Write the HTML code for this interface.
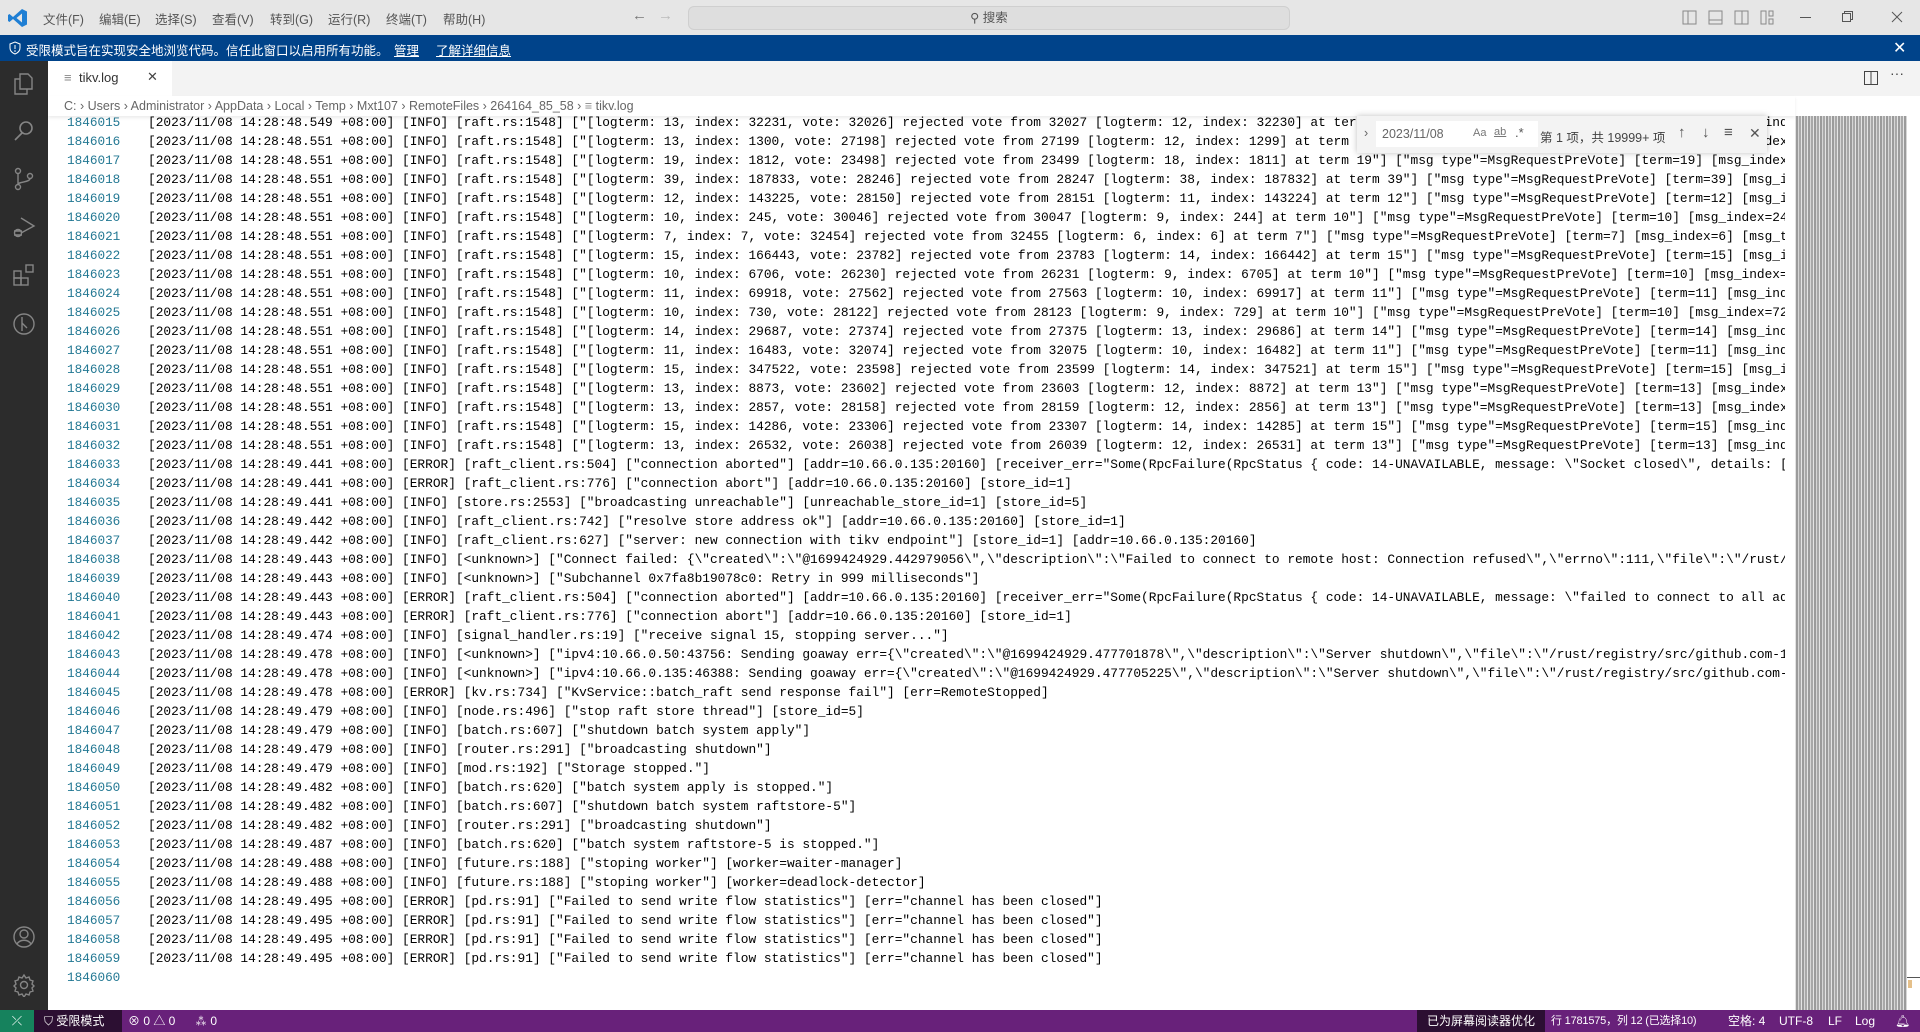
<!DOCTYPE html>
<html><head><meta charset="utf-8">
<style>
*{margin:0;padding:0;box-sizing:border-box}
body{width:1920px;height:1032px;overflow:hidden;background:#fff;font-family:"Liberation Sans","Noto Sans CJK SC",sans-serif;position:relative}
.abs{position:absolute}
#title{left:0;top:0;width:1920px;height:35px;background:#e6e6e6}
.menu{top:9px;font-size:12.5px;color:#555}
#banner{left:0;top:35px;width:1920px;height:26px;background:#00438a;color:#fff;font-size:12.5px}
#act{left:0;top:61px;width:48px;height:949px;background:#2c2c2c}
#tabs{left:48px;top:61px;width:1872px;height:35px;background:#f3f3f3}
#tab{left:48px;top:61px;width:124px;height:35px;background:#fff;font-size:13px;color:#333}
#bc{left:48px;top:96px;width:1747px;height:20px;background:#fff;font-size:12.5px;color:#666;padding-left:16px;line-height:20px;white-space:nowrap;box-shadow:0 2px 3px rgba(0,0,0,.08);z-index:2}
#code{left:48px;top:113px;width:1737px;height:897px;overflow:hidden;font-family:"Liberation Mono",monospace;font-size:12.83px;line-height:19px;white-space:pre}
.ln{position:absolute;left:19px;color:#237893;font-size:12.7px}
.tx{position:absolute;left:100px;color:#000}
#mini{left:1795px;top:116px;width:112px;height:894px;background:repeating-linear-gradient(90deg,#8a8a8a 0 2px,#d0d0d0 2px 3px,#9a9a9a 3px 5px,#e0e0e0 5px 6px);opacity:.85;border-left:1px solid #ddd}
#status{left:0;top:1010px;width:1920px;height:22px;background:#68217a;color:#fff;font-size:12px;line-height:22px;white-space:nowrap}
#find{left:1357px;top:116px;width:410px;height:37px;background:#f3f3f3;box-shadow:0 0 6px rgba(0,0,0,.25);z-index:3;font-size:12.5px;color:#555}
</style></head><body>
<div id="title" class="abs">
<svg class="abs" style="left:8px;top:8px" width="20" height="20" viewBox="0 0 20 20"><path d="M14 1 L19 3.5 V16.5 L14 19 L5 11 L1.5 14 L0 13 V7 L1.5 6 L5 9 L14 1 Z M14 5.5 L8.5 10 L14 14.5 Z" fill="#1f7fd4"/></svg>
<span class="abs menu" style="left:43px">文件(F)</span>
<span class="abs menu" style="left:99px">编辑(E)</span>
<span class="abs menu" style="left:155px">选择(S)</span>
<span class="abs menu" style="left:212px">查看(V)</span>
<span class="abs menu" style="left:270px">转到(G)</span>
<span class="abs menu" style="left:328px">运行(R)</span>
<span class="abs menu" style="left:386px">终端(T)</span>
<span class="abs menu" style="left:443px">帮助(H)</span>
<span class="abs" style="left:632px;top:7px;color:#777;font-size:15px">←</span>
<span class="abs" style="left:658px;top:7px;color:#bbb;font-size:15px">→</span>
<div class="abs" style="left:688px;top:6px;width:602px;height:24px;background:#dedede;border:1px solid #cfcfcf;border-radius:6px;font-size:12.5px;color:#555;text-align:center;line-height:22px">⚲ 搜索</div>
<svg class="abs" style="left:1682px;top:10px" width="16" height="16"><rect x="1" y="1" width="13" height="13" fill="none" stroke="#888"/><line x1="6" y1="1" x2="6" y2="14" stroke="#888"/></svg>
<svg class="abs" style="left:1708px;top:10px" width="16" height="16"><rect x="1" y="1" width="13" height="13" fill="none" stroke="#888"/><line x1="1" y1="10" x2="14" y2="10" stroke="#888"/></svg>
<svg class="abs" style="left:1734px;top:10px" width="16" height="16"><rect x="1" y="1" width="13" height="13" fill="none" stroke="#888"/><line x1="8" y1="1" x2="8" y2="14" stroke="#888"/></svg>
<svg class="abs" style="left:1760px;top:10px" width="16" height="16"><rect x="1" y="1" width="5" height="13" fill="none" stroke="#888"/><rect x="9" y="1" width="4" height="5" fill="none" stroke="#888"/><rect x="9" y="9" width="4" height="5" fill="none" stroke="#888"/></svg>
<div class="abs" style="left:1800px;top:17px;width:11px;height:1px;background:#555"></div>
<svg class="abs" style="left:1842px;top:11px" width="12" height="12"><rect x="0.5" y="2.5" width="8" height="8" fill="none" stroke="#555"/><path d="M2.5 2.5V0.5H10.5V8.5H8.5" fill="none" stroke="#555"/></svg>
<svg class="abs" style="left:1891px;top:11px" width="12" height="12"><path d="M1 1L11 11M11 1L1 11" stroke="#555"/></svg>
</div>
<div id="banner" class="abs">
<svg class="abs" style="left:9px;top:6px" width="12" height="14" viewBox="0 0 12 14"><path d="M6 1L11 3V7C11 10 8.5 12 6 13C3.5 12 1 10 1 7V3Z" fill="none" stroke="#fff"/><line x1="6" y1="4" x2="6" y2="8" stroke="#fff"/><circle cx="6" cy="10" r=".8" fill="#fff"/></svg>
<span class="abs" style="left:26px;top:5px">受限模式旨在实现安全地浏览代码。信任此窗口以启用所有功能。</span>
<span class="abs" style="left:394px;top:5px;text-decoration:underline">管理</span>
<span class="abs" style="left:436px;top:5px;text-decoration:underline">了解详细信息</span>
<span class="abs" style="left:1893px;top:3px;font-size:16px">✕</span>
</div>
<div id="act" class="abs">
<svg class="abs" style="left:12px;top:11px" width="24" height="24" fill="none" stroke="#858585" stroke-width="1.4"><path d="M8 2h8l4 4v11H8z"/><path d="M8 7H3v15h12v-5"/></svg>
<svg class="abs" style="left:12px;top:58px" width="24" height="24" fill="none" stroke="#858585" stroke-width="1.6"><circle cx="14" cy="9" r="6"/><path d="M10 14L3 21"/></svg>
<svg class="abs" style="left:12px;top:106px" width="24" height="24" fill="none" stroke="#858585" stroke-width="1.4"><circle cx="6" cy="4" r="2.5"/><circle cx="6" cy="20" r="2.5"/><circle cx="18" cy="9" r="2.5"/><path d="M6 6.5v11M18 11.5c0 4-12 3-12 6"/></svg>
<svg class="abs" style="left:12px;top:154px" width="24" height="24" fill="none" stroke="#858585" stroke-width="1.4"><path d="M9 3l13 8-13 7"/><circle cx="6" cy="18" r="3.5"/><path d="M2 16h8M2 20h8"/></svg>
<svg class="abs" style="left:12px;top:202px" width="24" height="24" fill="none" stroke="#858585" stroke-width="1.4"><rect x="2" y="8" width="7" height="7"/><rect x="2" y="15" width="7" height="7"/><rect x="9" y="15" width="7" height="7"/><rect x="14" y="2" width="7" height="7"/></svg>
<svg class="abs" style="left:12px;top:251px" width="24" height="24" fill="none" stroke="#858585" stroke-width="1.4"><circle cx="12" cy="12" r="10"/><path d="M10 5v14M10 11l5 5"/></svg>
<svg class="abs" style="left:12px;top:864px" width="24" height="24" fill="none" stroke="#858585" stroke-width="1.4"><circle cx="12" cy="12" r="10"/><circle cx="12" cy="9" r="4"/><path d="M5 19c3-5 11-5 14 0"/></svg>
<svg class="abs" style="left:12px;top:912px" width="24" height="24" fill="none" stroke="#858585" stroke-width="1.4"><circle cx="12" cy="12" r="3.5"/><path d="M12 2l2 3 3-1 1 3 3 1-1 3 2 2-2 2 1 3-3 1-1 3-3-1-2 3-2-3-3 1-1-3-3-1 1-3-2-2 2-2-1-3 3-1 1-3 3 1z"/></svg>
</div>
<div id="tabs" class="abs">
<svg class="abs" style="left:1816px;top:10px" width="14" height="14"><rect x="0.5" y="0.5" width="13" height="13" fill="none" stroke="#444"/><line x1="7" y1="0" x2="7" y2="14" stroke="#444"/></svg>
<span class="abs" style="left:1842px;top:4px;color:#444;font-size:14px">···</span>
</div>
<div id="tab" class="abs"><span class="abs" style="left:16px;top:9px;color:#888">≡</span><span class="abs" style="left:31px;top:9px">tikv.log</span><span class="abs" style="left:99px;top:8px;color:#444">✕</span></div>
<div id="bc" class="abs">C: › Users › Administrator › AppData › Local › Temp › Mxt107 › RemoteFiles › 264164_85_58 › <span style="color:#888">≡</span> tikv.log</div>
<div id="code" class="abs">
<div class="ln" style="top:0">1846015
1846016
1846017
1846018
1846019
1846020
1846021
1846022
1846023
1846024
1846025
1846026
1846027
1846028
1846029
1846030
1846031
1846032
1846033
1846034
1846035
1846036
1846037
1846038
1846039
1846040
1846041
1846042
1846043
1846044
1846045
1846046
1846047
1846048
1846049
1846050
1846051
1846052
1846053
1846054
1846055
1846056
1846057
1846058
1846059
1846060</div>
<div class="tx" style="top:0">[2023/11/08 14:28:48.549 +08:00] [INFO] [raft.rs:1548] ["[logterm: 13, index: 32231, vote: 32026] rejected vote from 32027 [logterm: 12, index: 32230] at term 13"] ["msg type"=MsgRequestPreVote] [term=13] [msg_ind
[2023/11/08 14:28:48.551 +08:00] [INFO] [raft.rs:1548] ["[logterm: 13, index: 1300, vote: 27198] rejected vote from 27199 [logterm: 12, index: 1299] at term 13"] ["msg type"=MsgRequestPreVote] [term=13] [msg_index
[2023/11/08 14:28:48.551 +08:00] [INFO] [raft.rs:1548] ["[logterm: 19, index: 1812, vote: 23498] rejected vote from 23499 [logterm: 18, index: 1811] at term 19"] ["msg type"=MsgRequestPreVote] [term=19] [msg_index
[2023/11/08 14:28:48.551 +08:00] [INFO] [raft.rs:1548] ["[logterm: 39, index: 187833, vote: 28246] rejected vote from 28247 [logterm: 38, index: 187832] at term 39"] ["msg type"=MsgRequestPreVote] [term=39] [msg_i
[2023/11/08 14:28:48.551 +08:00] [INFO] [raft.rs:1548] ["[logterm: 12, index: 143225, vote: 28150] rejected vote from 28151 [logterm: 11, index: 143224] at term 12"] ["msg type"=MsgRequestPreVote] [term=12] [msg_i
[2023/11/08 14:28:48.551 +08:00] [INFO] [raft.rs:1548] ["[logterm: 10, index: 245, vote: 30046] rejected vote from 30047 [logterm: 9, index: 244] at term 10"] ["msg type"=MsgRequestPreVote] [term=10] [msg_index=24
[2023/11/08 14:28:48.551 +08:00] [INFO] [raft.rs:1548] ["[logterm: 7, index: 7, vote: 32454] rejected vote from 32455 [logterm: 6, index: 6] at term 7"] ["msg type"=MsgRequestPreVote] [term=7] [msg_index=6] [msg_t
[2023/11/08 14:28:48.551 +08:00] [INFO] [raft.rs:1548] ["[logterm: 15, index: 166443, vote: 23782] rejected vote from 23783 [logterm: 14, index: 166442] at term 15"] ["msg type"=MsgRequestPreVote] [term=15] [msg_i
[2023/11/08 14:28:48.551 +08:00] [INFO] [raft.rs:1548] ["[logterm: 10, index: 6706, vote: 26230] rejected vote from 26231 [logterm: 9, index: 6705] at term 10"] ["msg type"=MsgRequestPreVote] [term=10] [msg_index=
[2023/11/08 14:28:48.551 +08:00] [INFO] [raft.rs:1548] ["[logterm: 11, index: 69918, vote: 27562] rejected vote from 27563 [logterm: 10, index: 69917] at term 11"] ["msg type"=MsgRequestPreVote] [term=11] [msg_ind
[2023/11/08 14:28:48.551 +08:00] [INFO] [raft.rs:1548] ["[logterm: 10, index: 730, vote: 28122] rejected vote from 28123 [logterm: 9, index: 729] at term 10"] ["msg type"=MsgRequestPreVote] [term=10] [msg_index=72
[2023/11/08 14:28:48.551 +08:00] [INFO] [raft.rs:1548] ["[logterm: 14, index: 29687, vote: 27374] rejected vote from 27375 [logterm: 13, index: 29686] at term 14"] ["msg type"=MsgRequestPreVote] [term=14] [msg_ind
[2023/11/08 14:28:48.551 +08:00] [INFO] [raft.rs:1548] ["[logterm: 11, index: 16483, vote: 32074] rejected vote from 32075 [logterm: 10, index: 16482] at term 11"] ["msg type"=MsgRequestPreVote] [term=11] [msg_ind
[2023/11/08 14:28:48.551 +08:00] [INFO] [raft.rs:1548] ["[logterm: 15, index: 347522, vote: 23598] rejected vote from 23599 [logterm: 14, index: 347521] at term 15"] ["msg type"=MsgRequestPreVote] [term=15] [msg_i
[2023/11/08 14:28:48.551 +08:00] [INFO] [raft.rs:1548] ["[logterm: 13, index: 8873, vote: 23602] rejected vote from 23603 [logterm: 12, index: 8872] at term 13"] ["msg type"=MsgRequestPreVote] [term=13] [msg_index
[2023/11/08 14:28:48.551 +08:00] [INFO] [raft.rs:1548] ["[logterm: 13, index: 2857, vote: 28158] rejected vote from 28159 [logterm: 12, index: 2856] at term 13"] ["msg type"=MsgRequestPreVote] [term=13] [msg_index
[2023/11/08 14:28:48.551 +08:00] [INFO] [raft.rs:1548] ["[logterm: 15, index: 14286, vote: 23306] rejected vote from 23307 [logterm: 14, index: 14285] at term 15"] ["msg type"=MsgRequestPreVote] [term=15] [msg_ind
[2023/11/08 14:28:48.551 +08:00] [INFO] [raft.rs:1548] ["[logterm: 13, index: 26532, vote: 26038] rejected vote from 26039 [logterm: 12, index: 26531] at term 13"] ["msg type"=MsgRequestPreVote] [term=13] [msg_ind
[2023/11/08 14:28:49.441 +08:00] [ERROR] [raft_client.rs:504] ["connection aborted"] [addr=10.66.0.135:20160] [receiver_err="Some(RpcFailure(RpcStatus { code: 14-UNAVAILABLE, message: \"Socket closed\", details: [
[2023/11/08 14:28:49.441 +08:00] [ERROR] [raft_client.rs:776] ["connection abort"] [addr=10.66.0.135:20160] [store_id=1]
[2023/11/08 14:28:49.441 +08:00] [INFO] [store.rs:2553] ["broadcasting unreachable"] [unreachable_store_id=1] [store_id=5]
[2023/11/08 14:28:49.442 +08:00] [INFO] [raft_client.rs:742] ["resolve store address ok"] [addr=10.66.0.135:20160] [store_id=1]
[2023/11/08 14:28:49.442 +08:00] [INFO] [raft_client.rs:627] ["server: new connection with tikv endpoint"] [store_id=1] [addr=10.66.0.135:20160]
[2023/11/08 14:28:49.443 +08:00] [INFO] [&lt;unknown&gt;] ["Connect failed: {\"created\":\"@1699424929.442979056\",\"description\":\"Failed to connect to remote host: Connection refused\",\"errno\":111,\"file\":\"/rust/
[2023/11/08 14:28:49.443 +08:00] [INFO] [&lt;unknown&gt;] ["Subchannel 0x7fa8b19078c0: Retry in 999 milliseconds"]
[2023/11/08 14:28:49.443 +08:00] [ERROR] [raft_client.rs:504] ["connection aborted"] [addr=10.66.0.135:20160] [receiver_err="Some(RpcFailure(RpcStatus { code: 14-UNAVAILABLE, message: \"failed to connect to all ad
[2023/11/08 14:28:49.443 +08:00] [ERROR] [raft_client.rs:776] ["connection abort"] [addr=10.66.0.135:20160] [store_id=1]
[2023/11/08 14:28:49.474 +08:00] [INFO] [signal_handler.rs:19] ["receive signal 15, stopping server..."]
[2023/11/08 14:28:49.478 +08:00] [INFO] [&lt;unknown&gt;] ["ipv4:10.66.0.50:43756: Sending goaway err={\"created\":\"@1699424929.477701878\",\"description\":\"Server shutdown\",\"file\":\"/rust/registry/src/github.com-1
[2023/11/08 14:28:49.478 +08:00] [INFO] [&lt;unknown&gt;] ["ipv4:10.66.0.135:46388: Sending goaway err={\"created\":\"@1699424929.477705225\",\"description\":\"Server shutdown\",\"file\":\"/rust/registry/src/github.com-
[2023/11/08 14:28:49.478 +08:00] [ERROR] [kv.rs:734] ["KvService::batch_raft send response fail"] [err=RemoteStopped]
[2023/11/08 14:28:49.479 +08:00] [INFO] [node.rs:496] ["stop raft store thread"] [store_id=5]
[2023/11/08 14:28:49.479 +08:00] [INFO] [batch.rs:607] ["shutdown batch system apply"]
[2023/11/08 14:28:49.479 +08:00] [INFO] [router.rs:291] ["broadcasting shutdown"]
[2023/11/08 14:28:49.479 +08:00] [INFO] [mod.rs:192] ["Storage stopped."]
[2023/11/08 14:28:49.482 +08:00] [INFO] [batch.rs:620] ["batch system apply is stopped."]
[2023/11/08 14:28:49.482 +08:00] [INFO] [batch.rs:607] ["shutdown batch system raftstore-5"]
[2023/11/08 14:28:49.482 +08:00] [INFO] [router.rs:291] ["broadcasting shutdown"]
[2023/11/08 14:28:49.487 +08:00] [INFO] [batch.rs:620] ["batch system raftstore-5 is stopped."]
[2023/11/08 14:28:49.488 +08:00] [INFO] [future.rs:188] ["stoping worker"] [worker=waiter-manager]
[2023/11/08 14:28:49.488 +08:00] [INFO] [future.rs:188] ["stoping worker"] [worker=deadlock-detector]
[2023/11/08 14:28:49.495 +08:00] [ERROR] [pd.rs:91] ["Failed to send write flow statistics"] [err="channel has been closed"]
[2023/11/08 14:28:49.495 +08:00] [ERROR] [pd.rs:91] ["Failed to send write flow statistics"] [err="channel has been closed"]
[2023/11/08 14:28:49.495 +08:00] [ERROR] [pd.rs:91] ["Failed to send write flow statistics"] [err="channel has been closed"]
[2023/11/08 14:28:49.495 +08:00] [ERROR] [pd.rs:91] ["Failed to send write flow statistics"] [err="channel has been closed"]
</div>
</div>
<div id="find" class="abs">
<span class="abs" style="left:7px;top:10px;color:#666">›</span>
<div class="abs" style="left:19px;top:5px;width:162px;height:26px;background:#fff"></div>
<span class="abs" style="left:25px;top:11px;color:#666">2023/11/08</span>
<span class="abs" style="left:116px;top:11px;font-size:11px;color:#777">Aa</span>
<span class="abs" style="left:137px;top:10px;font-size:11px;color:#777;text-decoration:underline">ab</span>
<span class="abs" style="left:158px;top:9px;font-size:13px;color:#555">.*</span>
<span class="abs" style="left:183px;top:11px;color:#444">第 1 项，共 19999+ 项</span>
<span class="abs" style="left:321px;top:8px;font-size:15px;color:#555">↑</span>
<span class="abs" style="left:345px;top:8px;font-size:15px;color:#555">↓</span>
<span class="abs" style="left:367px;top:8px;font-size:15px;color:#555">≡</span>
<span class="abs" style="left:392px;top:9px;font-size:14px;color:#555">✕</span>
</div>
<div id="mini" class="abs"></div>
<div class="abs" style="left:1907px;top:116px;width:13px;height:894px;background:#fff"></div>
<div class="abs" style="left:1907px;top:977px;width:13px;height:1px;background:#555"></div>
<div class="abs" style="left:1908px;top:980px;width:4px;height:8px;background:#e5c08a"></div>
<div id="status" class="abs">
<div class="abs" style="left:0;top:0;width:34px;height:22px;background:#16825d;text-align:center;font-size:13px">⤫</div>
<div class="abs" style="left:34px;top:0;width:88px;height:22px;background:#2c0f32;padding-left:10px">⛉ 受限模式</div>
<span class="abs" style="left:128px">⊗ 0 △ 0</span>
<span class="abs" style="left:195px">⁂ 0</span>
<div class="abs" style="left:1417px;top:0;width:128px;height:22px;background:#2c0f32;text-align:center">已为屏幕阅读器优化</div>
<span class="abs" style="left:1551px;font-size:11px;letter-spacing:-0.2px">行 1781575，列 12 (已选择10)</span>
<span class="abs" style="left:1728px">空格: 4</span>
<span class="abs" style="left:1779px">UTF-8</span>
<span class="abs" style="left:1828px">LF</span>
<span class="abs" style="left:1855px">Log</span>
<span class="abs" style="left:1895px">🔔︎</span>
</div>
</body></html>
